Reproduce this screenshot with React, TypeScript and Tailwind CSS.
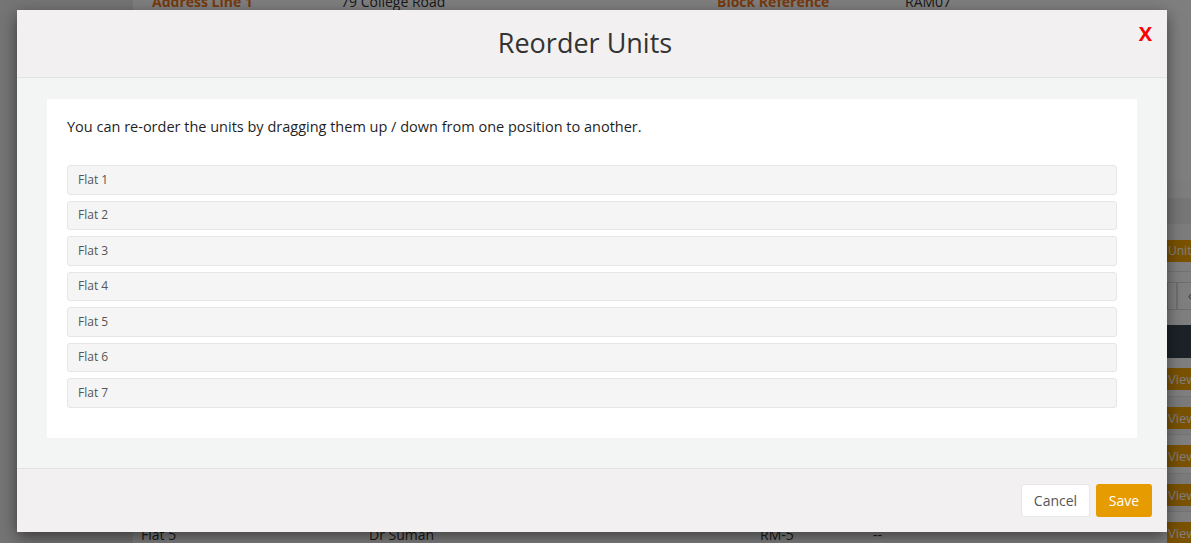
import React from "react";

const units = ["Flat 1", "Flat 2", "Flat 3", "Flat 4", "Flat 5", "Flat 6", "Flat 7"];

export default function App() {
  return (
    <div
      className="relative w-[1191px] h-[543px] overflow-hidden"
      style={{ fontFamily: '"Open Sans", "Liberation Sans", sans-serif' }}
    >
      {/* Background page */}
      <div className="flex h-full w-full">
        <div className="w-[133px] shrink-0 bg-[#ebebeb]" />
        <div className="flex-1 min-w-0 bg-white flex flex-col overflow-hidden">
          <div className="shrink-0 -mt-[7px] h-[18px] grid grid-cols-[189px_376px_188px_1fr] pl-[19px] text-[14px] leading-[18px]">
            <span className="font-bold text-[#f07418]">Address Line 1</span>
            <span className="text-[#333]">79 College Road</span>
            <span className="font-bold text-[#f07418]">Block Reference</span>
            <span className="text-[#333]">RAM07</span>
          </div>
          <div className="shrink-0 h-[169px]" />
          <div className="shrink-0 h-[18px] bg-[#fcfcfc]" />
          <div className="shrink-0 h-[26px] bg-[#eeeeee]" />
          <div className="shrink-0 h-[16px] bg-[#fafafa]" />
          <div className="shrink-0 h-[22px] flex">
            <div className="w-[1034px] shrink-0" />
            <span className="shrink-0 bg-[#f4a400] text-white text-[12px] leading-[22px] pl-[1px] pr-[10px] whitespace-nowrap">
              Unit
            </span>
          </div>
          <div className="shrink-0 h-[10px] border-b border-[#e4e4e4]" />
          <div className="shrink-0 h-[10px]" />
          <div className="shrink-0 h-[28px] flex">
            <div className="w-[1034px] shrink-0" />
            <div className="shrink-0 w-[10px] h-full border border-[#dddddd]" />
            <div className="shrink-0 w-[30px] h-full border border-[#dddddd] text-[12px] text-[#666] pl-[10px] leading-[26px]">‹</div>
          </div>
          <div className="shrink-0 h-[15px]" />
          <div className="shrink-0 h-[33px] bg-[#38444e]" />
          {[0, 1, 2, 3, 4].map((i) => (
            <div
              key={i}
              className={`h-[38.5px] shrink-0 border-b border-[#e8e8e8] flex items-start pt-[10px] ${i % 2 === 0 ? "bg-white" : "bg-[#f6f6f6]"}`}
            >
              <div className="shrink-0 grid grid-cols-[228px_391px_113px_1fr] pl-[8px] w-[1034px] text-[14px] leading-[22px] text-[#333]">
                {i === 4 ? (
                  <>
                    <span className="pt-[2px]">Flat 5</span>
                    <span className="pt-[2px]">Dr Suman</span>
                    <span className="pt-[2px]">RM-5</span>
                    <span className="pt-[2px]">--</span>
                  </>
                ) : null}
              </div>
              <span className="shrink-0 bg-[#f4a400] text-white text-[13px] leading-[22px] pl-[1px] pr-[8px] whitespace-nowrap">
                View
              </span>
            </div>
          ))}
        </div>
      </div>

      {/* Overlay */}
      <div className="absolute inset-0 bg-black/50" />

      {/* Modal */}
      <div className="absolute left-[17px] top-[10px] w-[1150px] h-[522px] flex flex-col bg-[#f2f0f1] shadow-[0_5px_15px_rgba(0,0,0,0.5)]">
        <div className="relative h-[68px] shrink-0 border-b border-[#e3e3e3] flex items-center justify-center pr-[14px]">
          <h2 className="text-[27px] leading-[34px] text-[#333] pb-[1px]">Reorder Units</h2>
          <button className="absolute right-[15px] top-[12px] text-[20px] leading-[24px] font-bold text-[#ff0000]">
            X
          </button>
        </div>
        <div className="h-[390px] shrink-0 bg-[#f3f5f4] pt-[21px] px-[30px] pb-[30px]">
          <div className="bg-white h-full px-[20px] pt-[18px]">
            <p className="text-[14.5px] leading-[20px] text-[#1f1f1f]">
              You can re-order the units by dragging them up / down from one position to another.
            </p>
            <div className="mt-[28px] flex flex-col gap-[6px]">
              {units.map((u) => (
                <div
                  key={u}
                  className="h-[29.5px] border border-[#e6e6e6] rounded-[3px] bg-[#f5f5f5] pl-[10px] flex items-center text-[12px] text-[#555]"
                >
                  {u}
                </div>
              ))}
            </div>
          </div>
        </div>
        <div className="flex-1 border-t border-[#e3e3e3] flex items-start justify-end pt-[15px] pr-[15px] gap-[6px]">
          <button className="h-[33px] w-[69px] bg-white border border-[#e6e6e6] rounded-[3px] text-[14px] text-[#555]">
            Cancel
          </button>
          <button className="h-[33px] w-[56px] bg-[#e69c00] rounded-[3px] text-[14px] text-white">
            Save
          </button>
        </div>
      </div>
    </div>
  );
}
